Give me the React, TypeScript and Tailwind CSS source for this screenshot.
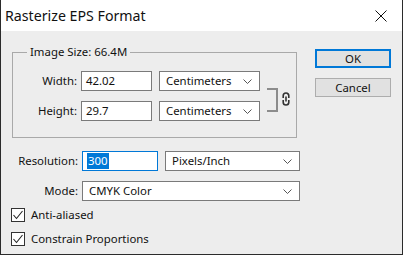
import React from "react";

const font = { fontFamily: '"Noto Sans", "Open Sans", sans-serif' };

const Chevron = () => (
  <svg width="9" height="5" viewBox="0 0 9 5" className="shrink-0">
    <path d="M0.5 0.5 L4.5 4.5 L8.5 0.5" fill="none" stroke="#555" strokeWidth="1" />
  </svg>
);

const Select = ({ value, width }: { value: string; width: string }) => (
  <div className={`${width} h-[20px] bg-white border border-[#7a7a7a] flex items-center justify-between pl-[6px] pr-[7px]`}>
    <span>{value}</span>
    <Chevron />
  </div>
);

const Check = ({ label }: { label: string }) => (
  <div className="h-[24px] flex items-center gap-[6px]">
    <div className="w-[14px] h-[14px] bg-white border border-[#333] flex items-center justify-center">
      <svg width="12" height="12" viewBox="0 0 12 12">
        <path d="M1.5 6 L4.5 9.5 L10.5 2" fill="none" stroke="#222" strokeWidth="1.1" />
      </svg>
    </div>
    <span>{label}</span>
  </div>
);

const LinkIcon = () => (
  <svg width="8" height="14" viewBox="0 0 8 14">
    <path
      d="M1.2 6 V3.8 a2.8 2.8 0 0 1 5.6 0 V6 M1.2 8 V10.2 a2.8 2.8 0 0 0 5.6 0 V8 M4 4.5 V9.5"
      fill="none"
      stroke="#333"
      strokeWidth="1.6"
    />
  </svg>
);

export default function App() {
  return (
    <div
      style={font}
      className="w-[403px] h-[255px] flex flex-col bg-[#ededed] border-x border-b border-[#2b2b2b] text-[11.4px] leading-[16px] text-[#111] overflow-hidden"
    >
      <div className="h-[31px] shrink-0 bg-white flex items-center justify-between pl-[4px] pr-[15px]">
        <span className="text-[14.2px] leading-[20px] text-[#111]">Rasterize EPS Format</span>
        <svg width="12" height="12" viewBox="0 0 12 12">
          <path d="M0.5 0.5 L11.5 11.5 M11.5 0.5 L0.5 11.5" stroke="#111" strokeWidth="1" />
        </svg>
      </div>

      <div className="flex-1 flex">
        <div className="flex flex-col pl-[11px] pt-[13px]">
          <fieldset className="w-[285px] border border-[#a9a9a9] pb-[16px]">
            <legend className="ml-[14px] px-[3px] leading-[16px]">Image Size: 66.4M</legend>
            <div className="flex pt-[11px]">
              <div className="flex flex-col gap-[10px]">
                <div className="flex items-center">
                  <span className="w-[68px] text-right pr-[4px]">Width:</span>
                  <div className="w-[71px] h-[20px] bg-white border border-[#7a7a7a] flex items-center pl-[4px]">42.02</div>
                  <div className="ml-[7px]">
                    <Select value="Centimeters" width="w-[101px]" />
                  </div>
                </div>
                <div className="flex items-center">
                  <span className="w-[68px] text-right pr-[4px]">Height:</span>
                  <div className="w-[71px] h-[20px] bg-white border border-[#7a7a7a] flex items-center pl-[4px]">29.7</div>
                  <div className="ml-[7px]">
                    <Select value="Centimeters" width="w-[101px]" />
                  </div>
                </div>
              </div>
              <div className="ml-[7px] mt-[17px] w-[11px] h-[24px] border-y-2 border-r-2 border-[#8c8c8c]" />
              <div className="ml-[4px] mt-[21px]">
                <LinkIcon />
              </div>
            </div>
          </fieldset>

          <div className="flex items-center mt-[13px]">
            <span className="w-[70px] text-right pr-[4px]">Resolution:</span>
            <div className="w-[76px] h-[20px] bg-white border border-[#0078d7] flex items-center pl-[4px]">
              <span className="bg-[#0078d7] text-white px-px leading-[16px]">300</span>
            </div>
            <div className="ml-[7px]">
              <Select value="Pixels/Inch" width="w-[135px]" />
            </div>
          </div>

          <div className="flex items-center mt-[10px]">
            <span className="w-[70px] text-right pr-[4px]">Mode:</span>
            <Select value="CMYK Color" width="w-[218px]" />
          </div>

          <div className="flex flex-col mt-[2px] -ml-px">
            <Check label="Anti-aliased" />
            <Check label="Constrain Proportions" />
          </div>
        </div>

        <div className="ml-auto mr-[11px] pt-[18px] flex flex-col gap-[10px]">
          <button className="w-[76px] h-[19px] bg-[#e1e1e1] border-2 border-[#0078d7] flex items-center justify-center leading-[15px]">
            OK
          </button>
          <button className="w-[76px] h-[19px] bg-[#e1e1e1] border border-[#adadad] flex items-center justify-center leading-[15px]">
            Cancel
          </button>
        </div>
      </div>
    </div>
  );
}
